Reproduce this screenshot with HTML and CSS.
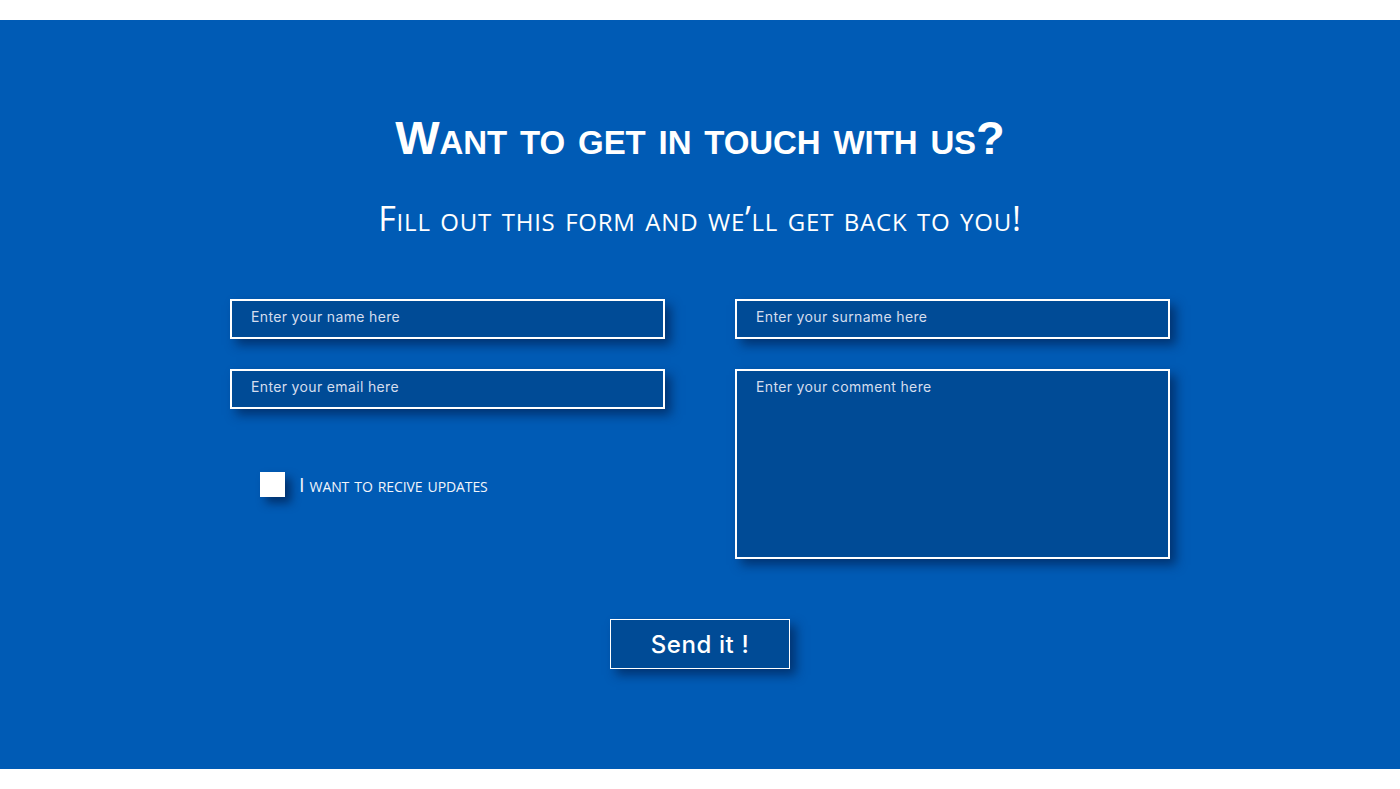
FILE: index.html
```html
<!DOCTYPE html>
<html lang="en">
<head>
<meta charset="utf-8">
<title>Contact</title>
<link rel="stylesheet" href="styles.css">
</head>
<body>
<section class="contact">
  <h1 class="title">Want to get in touch with us?</h1>
  <h2 class="subtitle">Fill out this form and we’ll get back to you!</h2>
  <form class="form">
    <div class="grid">
      <div class="col">
        <input class="field" type="text" placeholder="Enter your name here">
        <input class="field" type="email" placeholder="Enter your email here">
        <label class="check">
          <span class="box"></span>
          <span class="check-text">I want to recive updates</span>
        </label>
      </div>
      <div class="col">
        <input class="field" type="text" placeholder="Enter your surname here">
        <textarea class="field area" placeholder="Enter your comment here"></textarea>
      </div>
    </div>
    <div class="actions">
      <button class="send" type="button">Send it !</button>
    </div>
  </form>
</section>
</body>
</html>
```
FILE: styles.css
```css
html, body {
  margin: 0;
  padding: 0;
  background: #ffffff;
}
body {
  padding: 20px 0;
}
.contact {
  background: #005bb5;
  min-height: 749px;
  box-sizing: border-box;
  padding-top: 88px;
  display: flex;
  flex-direction: column;
  align-items: center;
}
.title {
  margin: 0;
  font-family: "Liberation Sans", Arial, sans-serif;
  font-weight: 700;
  font-variant: small-caps;
  font-size: 47px;
  letter-spacing: -0.1px;
  line-height: 60px;
  color: #fff;
  text-transform: lowercase;
}
.title::first-letter {
  text-transform: uppercase;
}
.subtitle {
  margin: 30px 0 0;
  font-family: "Open Sans", sans-serif;
  font-weight: 400;
  font-variant: small-caps;
  font-size: 34px;
  letter-spacing: 0.78px;
  line-height: 40px;
  color: #fff;
}
.form {
  width: 940px;
  margin-top: 61px;
}
.grid {
  display: grid;
  grid-template-columns: 435px 435px;
  column-gap: 70px;
}
.col {
  display: flex;
  flex-direction: column;
  gap: 30px;
}
.field {
  display: block;
  box-sizing: border-box;
  width: 100%;
  height: 40px;
  margin: 0;
  padding: 0 19px 6px;
  border: 2px solid #fff;
  border-radius: 0;
  background: #004b96;
  color: #fff;
  font-family: Inter, "Noto Sans", sans-serif;
  font-size: 14px;
  letter-spacing: 0.35px;
  line-height: 18px;
  box-shadow: 6px 6px 10px rgba(0, 20, 60, 0.55);
  outline: none;
  resize: none;
  vertical-align: top;
}
.field::placeholder {
  color: #d6deee;
  opacity: 1;
}
.area {
  height: 190px;
  padding-top: 7px;
}
.check {
  display: flex;
  align-items: center;
  gap: 14px;
  margin: 32px 0 0 30px;
}
.box {
  width: 25px;
  height: 25px;
  background: #fff;
  box-shadow: 6px 6px 10px rgba(0, 20, 60, 0.6);
}
.check-text {
  font-family: "Open Sans", sans-serif;
  font-variant: small-caps;
  font-size: 20px;
  letter-spacing: -0.1px;
  color: #f2f5fb;
}
.actions {
  display: flex;
  justify-content: center;
  margin-top: 60px;
}
.send {
  width: 180px;
  height: 50px;
  box-sizing: border-box;
  border: 1px solid #fff;
  background: #004b96;
  color: #fff;
  font-family: Inter, "Noto Sans", sans-serif;
  font-weight: 500;
  font-size: 24px;
  letter-spacing: 0.6px;
  box-shadow: 6px 6px 10px rgba(0, 20, 60, 0.55);
  cursor: pointer;
}
```
